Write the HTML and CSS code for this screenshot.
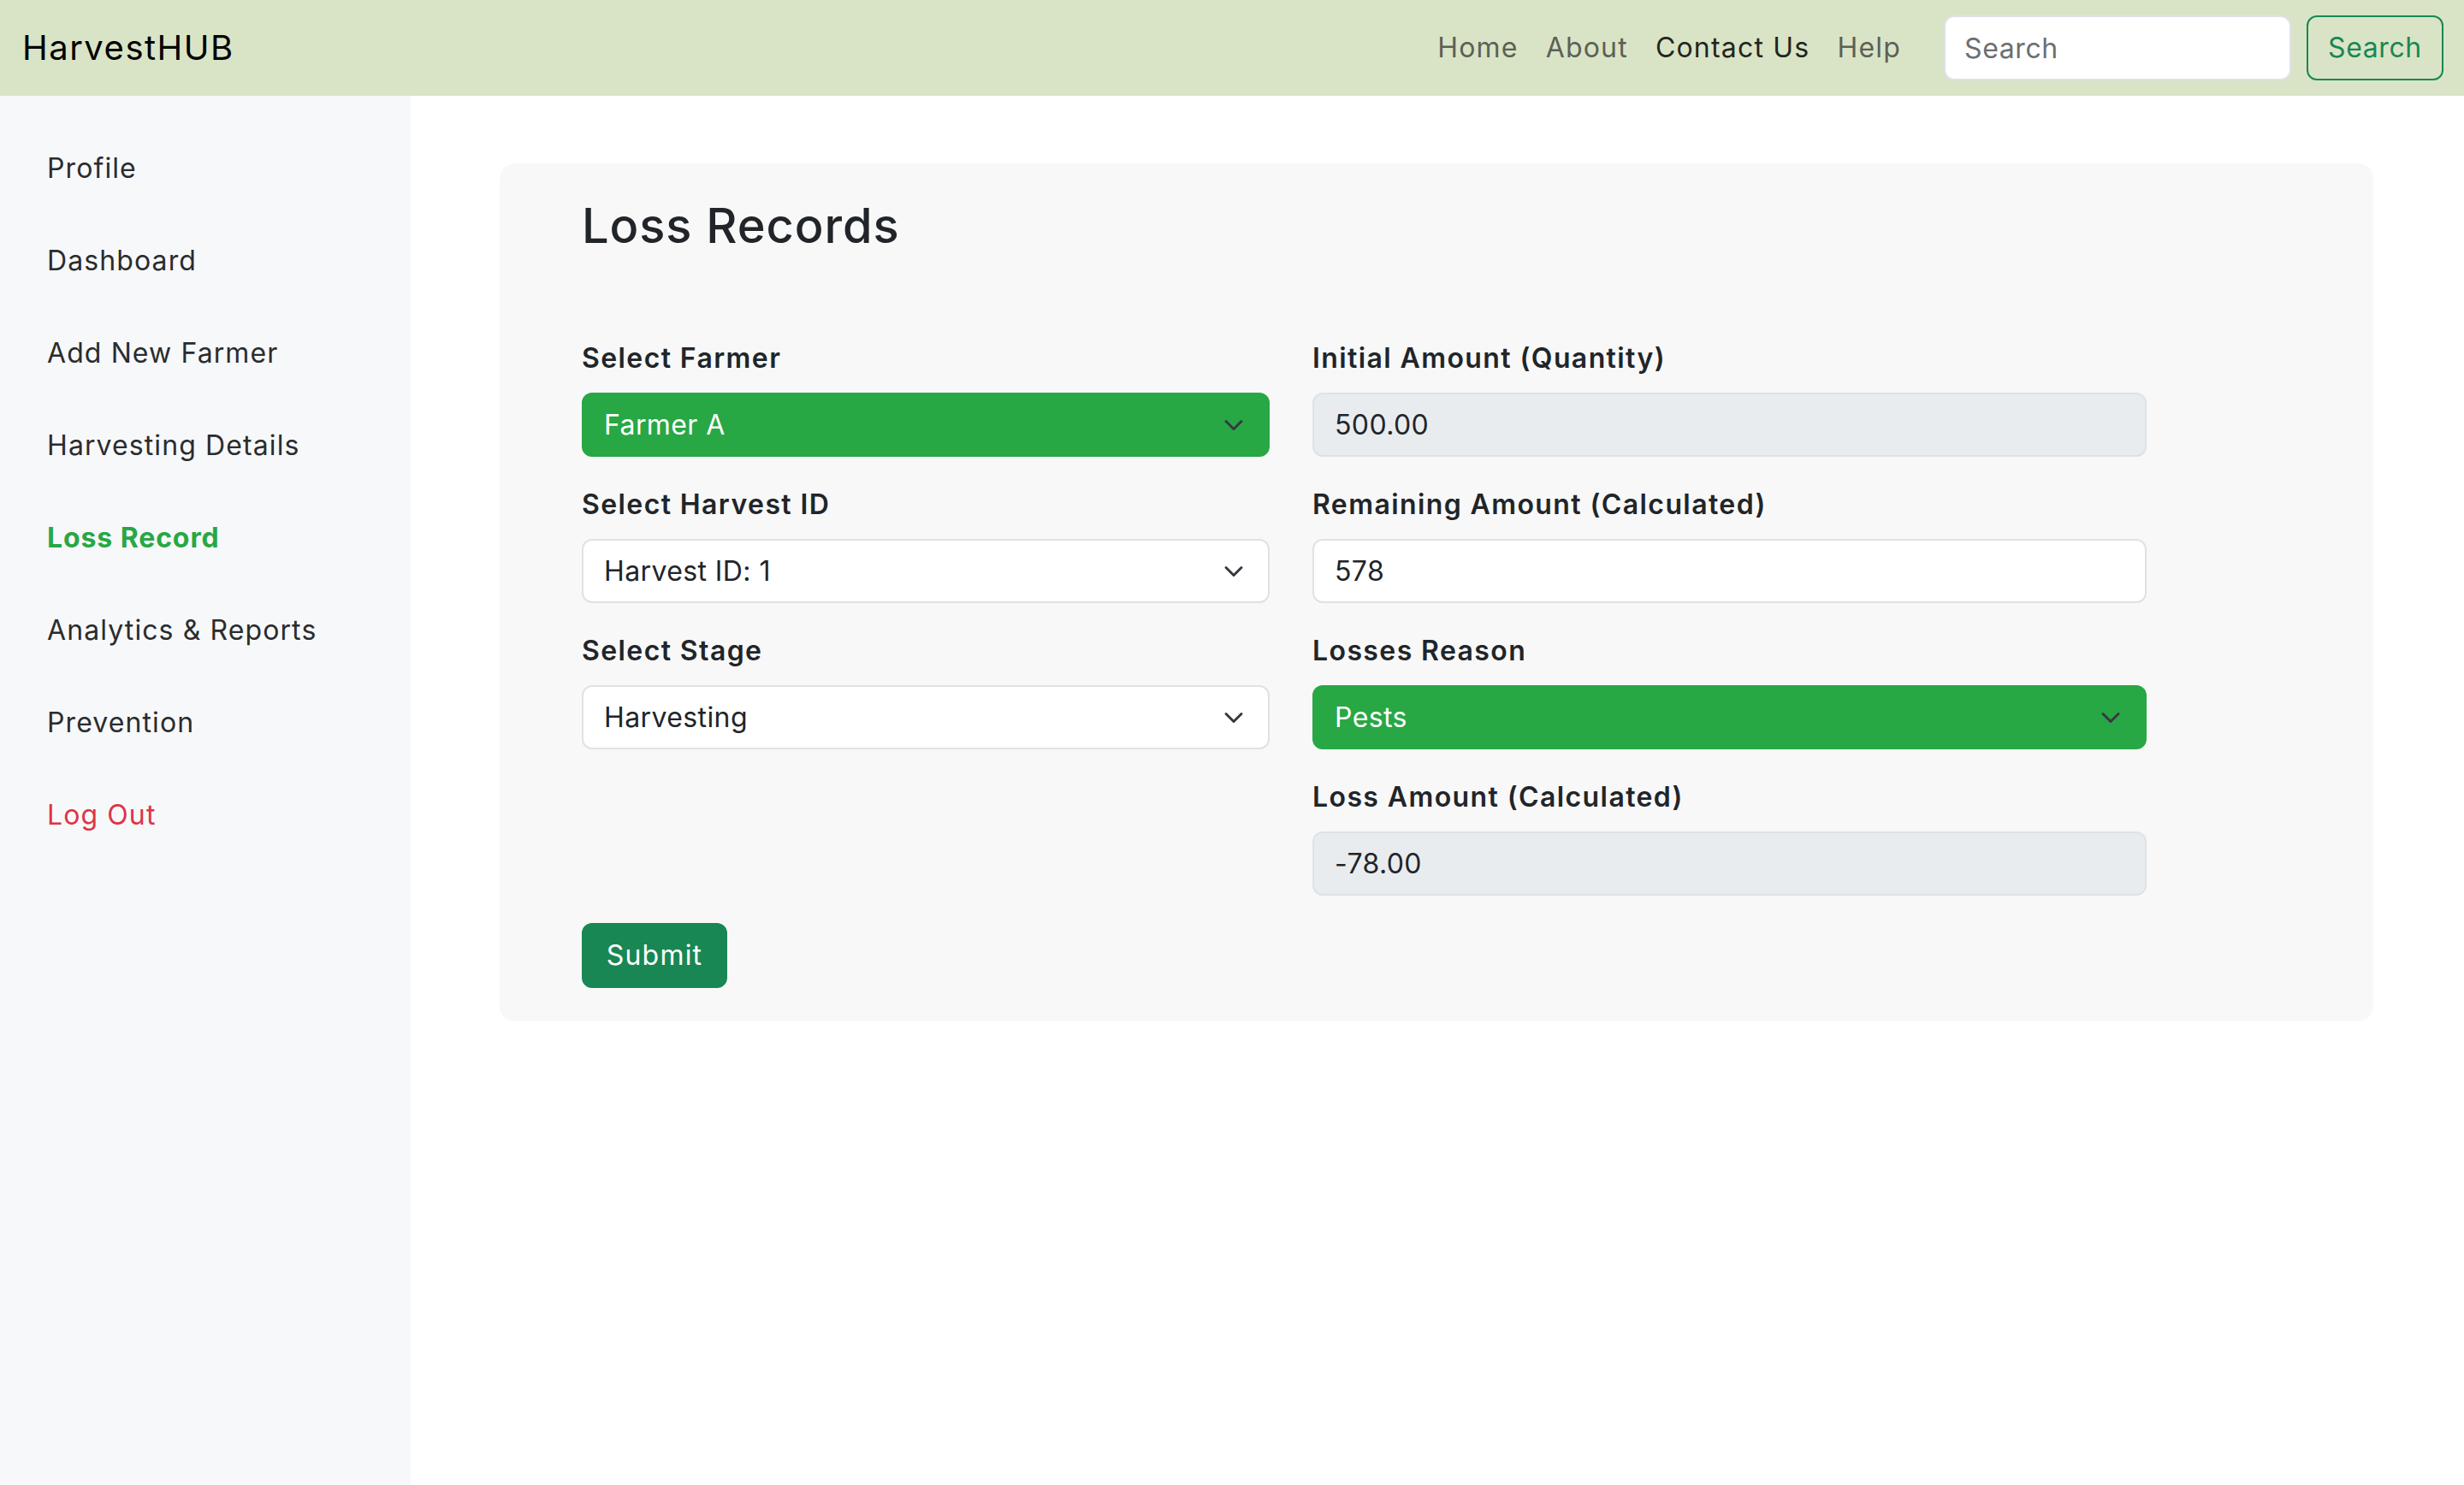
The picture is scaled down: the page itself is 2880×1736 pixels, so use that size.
FILE: index.html
```html
<!DOCTYPE html>
<html lang="en">
<head>
<meta charset="utf-8">
<title>HarvestHUB - Loss Records</title>
<link rel="stylesheet" href="styles.css">
</head>
<body>
<header class="navbar">
  <a class="brand" href="#">HarvestHUB</a>
  <div class="nav-right">
    <ul class="nav-links">
      <li><a class="nav-link" href="#">Home</a></li>
      <li><a class="nav-link" href="#">About</a></li>
      <li><a class="nav-link active" href="#">Contact Us</a></li>
      <li><a class="nav-link" href="#">Help</a></li>
    </ul>
    <form class="search-form">
      <input class="search-input" type="text" placeholder="Search">
      <button class="search-btn" type="button">Search</button>
    </form>
  </div>
</header>

<div class="layout">
  <aside class="sidebar">
    <ul class="side-nav">
      <li><a class="side-link" href="#">Profile</a></li>
      <li><a class="side-link" href="#">Dashboard</a></li>
      <li><a class="side-link" href="#">Add New Farmer</a></li>
      <li><a class="side-link" href="#">Harvesting Details</a></li>
      <li><a class="side-link current" href="#">Loss Record</a></li>
      <li><a class="side-link" href="#">Analytics &amp; Reports</a></li>
      <li><a class="side-link" href="#">Prevention</a></li>
      <li><a class="side-link logout" href="#">Log Out</a></li>
    </ul>
  </aside>

  <main class="main">
    <section class="card">
      <h3 class="card-title">Loss Records</h3>
      <form class="loss-form">
        <div class="form-grid">
          <div class="form-col">
            <div class="group">
              <label class="label">Select Farmer</label>
              <div class="select green"><span>Farmer A</span><svg class="chev" viewBox="0 0 16 16" width="32" height="24"><path d="m2 5 6 6 6-6" fill="none" stroke="#343a40" stroke-width="2" stroke-linecap="round" stroke-linejoin="round"/></svg></div>
            </div>
            <div class="group">
              <label class="label">Select Harvest ID</label>
              <div class="select"><span>Harvest ID: 1</span><svg class="chev" viewBox="0 0 16 16" width="32" height="24"><path d="m2 5 6 6 6-6" fill="none" stroke="#343a40" stroke-width="2" stroke-linecap="round" stroke-linejoin="round"/></svg></div>
            </div>
            <div class="group">
              <label class="label">Select Stage</label>
              <div class="select"><span>Harvesting</span><svg class="chev" viewBox="0 0 16 16" width="32" height="24"><path d="m2 5 6 6 6-6" fill="none" stroke="#343a40" stroke-width="2" stroke-linecap="round" stroke-linejoin="round"/></svg></div>
            </div>
          </div>
          <div class="form-col">
            <div class="group">
              <label class="label">Initial Amount (Quantity)</label>
              <div class="input disabled">500.00</div>
            </div>
            <div class="group">
              <label class="label">Remaining Amount (Calculated)</label>
              <div class="input">578</div>
            </div>
            <div class="group">
              <label class="label">Losses Reason</label>
              <div class="select green"><span>Pests</span><svg class="chev" viewBox="0 0 16 16" width="32" height="24"><path d="m2 5 6 6 6-6" fill="none" stroke="#343a40" stroke-width="2" stroke-linecap="round" stroke-linejoin="round"/></svg></div>
            </div>
            <div class="group">
              <label class="label">Loss Amount (Calculated)</label>
              <div class="input disabled">-78.00</div>
            </div>
          </div>
        </div>
        <button class="submit" type="button">Submit</button>
      </form>
    </section>
  </main>
</div>
</body>
</html>
```

FILE: styles.css
```css
* { box-sizing: border-box; }

html, body {
  margin: 0;
  padding: 0;
}

body {
  font-family: Inter, "Noto Sans", "DejaVu Sans", sans-serif;
  font-size: 32px;
  line-height: 1.5;
  color: #212529;
  background: #ffffff;
  width: 2880px;
  height: 1736px;
  overflow: hidden;
}

a { text-decoration: none; color: inherit; }
ul { list-style: none; margin: 0; padding: 0; }

/* ---------- navbar ---------- */
.navbar {
  height: 112px;
  background: #d9e4c6;
  display: flex;
  align-items: center;
  justify-content: space-between;
  padding: 0 24px 0 26px;
}

.brand {
  font-size: 40px;
  color: #000;
  letter-spacing: 1.5px;
}

.nav-right {
  display: flex;
  align-items: center;
}

.nav-links {
  display: flex;
  align-items: center;
  margin-right: 34px;
}

.nav-link {
  display: block;
  padding: 0 16px;
  color: #5b6155;
  letter-spacing: 1.2px;
}

.nav-link.active { color: #22251f; }

.search-form {
  display: flex;
  align-items: center;
  gap: 18px;
}

.search-input {
  width: 406px;
  height: 76px;
  border: 2px solid #dee2e6;
  border-radius: 12px;
  padding: 0 22px;
  font: inherit;
  letter-spacing: 0.6px;
  color: #212529;
  background: #fff;
}

.search-input::placeholder { color: #6b6f72; }

.search-btn {
  width: 160px;
  height: 76px;
  border: 2px solid #198754;
  border-radius: 12px;
  background: transparent;
  color: #198754;
  font: inherit;
  letter-spacing: 0.6px;
  padding: 0;
}

/* ---------- layout ---------- */
.layout {
  display: flex;
  height: calc(1736px - 112px);
}

.sidebar {
  width: 480px;
  flex: none;
  background: #f7f8fa;
  padding-top: 31px;
}

.side-link {
  display: flex;
  align-items: center;
  height: 108px;
  padding-left: 55px;
  color: #2a2c2e;
  letter-spacing: 1.1px;
}

.side-link.current {
  color: #28a745;
  font-weight: 700;
  letter-spacing: 0.9px;
}

.side-link.logout { color: #dc3545; }

.main {
  flex: 1;
  padding: 79px 106px 0 104px;
}

/* ---------- card ---------- */
.card {
  background: #f8f8f8;
  border-radius: 18px;
  padding: 40px 96px 39px 96px;
}

.card-title {
  margin: 0 0 97px;
  font-size: 56px;
  font-weight: 500;
  line-height: 67px;
  letter-spacing: 0.9px;
}

.form-grid {
  display: grid;
  grid-template-columns: 804px 975px;
  column-gap: 50px;
  align-items: start;
}

.group { margin-bottom: 32px; }

.label {
  display: block;
  margin-bottom: 16px;
  font-weight: 600;
  line-height: 48px;
  letter-spacing: 1.4px;
}

.select, .input {
  height: 75px;
  border: 2px solid #dee2e6;
  border-radius: 12px;
  background: #fff;
  padding: 0 24px;
  display: flex;
  align-items: center;
  letter-spacing: 0.4px;
}

.select { justify-content: space-between; }

.select.green {
  background: #28a745;
  border-color: #28a745;
  color: #fff;
}

.input.disabled { background: #e9ecef; }

.chev { flex: none; display: block; }

.submit {
  height: 76px;
  width: 170px;
  border: 2px solid #198754;
  border-radius: 12px;
  background: #198754;
  color: #fff;
  font: inherit;
  letter-spacing: 1.2px;
  padding: 0;
  display: block;
}
```
